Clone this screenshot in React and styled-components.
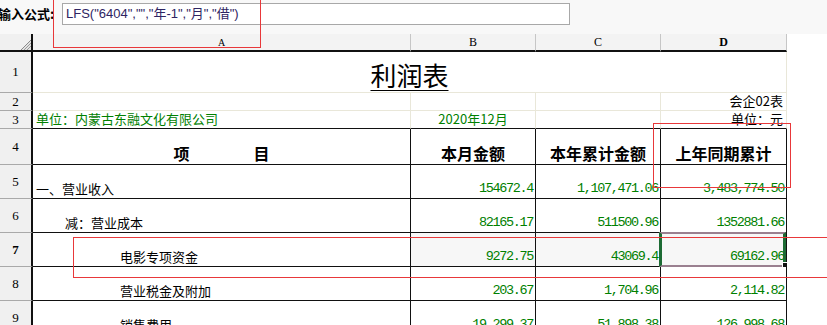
import React from "react";
import styled, { createGlobalStyle } from "styled-components";

// 列宽: 行号 | A | B | C | D | 空白
const COLS = "33px 378px 125px 125px 126px 1fr";
const LIGHT = "#e9e7d9";
const DARK = "#111";
const GREEN = "#008000";

const GlobalStyle = createGlobalStyle`
  html, body {
    margin: 0;
    padding: 0;
    overflow: hidden;
    background: #fff;
  }
  body {
    font-family: "Noto Sans CJK SC", "Liberation Sans", sans-serif;
    color: #000;
  }
`;

const Page = styled.div`
  position: relative;
  width: 827px;
  height: 325px;
  overflow: hidden;
`;

// 公式栏
const FormulaBar = styled.div`
  display: flex;
  align-items: flex-start;
  height: 34px;
  padding-top: 3px;
  box-sizing: border-box;
  background: #f8f8f8;
`;

const FormulaLabel = styled.div`
  width: 64px;
  margin-left: -2px;
  height: 22px;
  line-height: 22px;
  font-size: 13px;
  font-weight: 700;
  white-space: nowrap;
`;

const FormulaBox = styled.div`
  width: 508px;
  height: 22px;
  box-sizing: border-box;
  border: 1px solid #a8a8a8;
  background: #fff;
  padding-left: 3px;
  line-height: 20px;
  font-size: 13px;
  font-family: "Liberation Sans", "Noto Sans CJK SC", sans-serif;
  color: #2e2462;
  white-space: nowrap;
`;

// 列标题
const HeaderRow = styled.div`
  display: grid;
  grid-template-columns: ${COLS};
  height: 18px;
`;

const Corner = styled.div`
  position: relative;
  background: #f0f0f0;
  border-right: 2px solid ${DARK};
  border-bottom: 2px solid ${DARK};
  svg {
    position: absolute;
    right: 0;
    bottom: 0;
  }
`;

const ColHead = styled.div`
  display: flex;
  align-items: center;
  justify-content: center;
  background: #f3f3f3;
  border-right: 1px solid #c6c6c6;
  border-bottom: 2px solid ${DARK};
  font-family: "Liberation Serif", serif;
  font-size: ${(p) => (p.$small ? "10px" : "12px")};
  font-weight: ${(p) => (p.$active ? 700 : 400)};
`;

const Blank = styled.div`
  background: #fff;
`;

// 表格行
const Row = styled.div`
  display: grid;
  grid-template-columns: ${COLS};
  height: ${(p) => p.$h}px;
`;

const RowHead = styled.div`
  display: flex;
  align-items: center;
  justify-content: center;
  background: #f0f0f0;
  border-right: 2px solid ${DARK};
  border-bottom: 1px solid #a9a9a9;
  font-family: "Liberation Serif", serif;
  font-size: 13px;
  font-weight: ${(p) => (p.$active ? 700 : 400)};
`;

const Cell = styled.div`
  position: relative;
  display: flex;
  align-items: flex-end;
  justify-content: ${(p) => p.$align || "flex-start"};
  box-sizing: border-box;
  padding: 0 3px 1px ${(p) => (p.$indent != null ? p.$indent : 3)}px;
  border-right: 1px solid ${(p) => (p.$dark ? DARK : LIGHT)};
  border-bottom: 1px solid ${(p) => (p.$darkBottom || p.$dark ? DARK : LIGHT)};
  background: ${(p) => (p.$shade ? "#f7f7f7" : "#fff")};
  color: ${(p) => (p.$green ? GREEN : "#000")};
  font-size: 13px;
  line-height: 16px;
  white-space: nowrap;
`;

const TitleCell = styled(Cell)`
  grid-column: span 4;
  justify-content: center;
  padding-bottom: 2px;
`;

const Title = styled.span`
  font-size: 26px;
  line-height: 30px;
  text-decoration: underline;
  text-decoration-thickness: 1px;
  text-underline-offset: 4px;
`;

const HeadText = styled.span`
  font-size: 16px;
  font-weight: 700;
  line-height: 19px;
`;

const Num = styled.span`
  font-family: "Liberation Mono", monospace;
  font-size: 13.5px;
  letter-spacing: -1.35px;
  margin-right: -1px;
  color: ${GREEN};
`;

const Selection = styled.div`
  position: absolute;
  left: -2px;
  top: -1px;
  right: 0;
  bottom: -1px;
  border-left: 3px solid #1d6b34;
  border-right: 3px solid #1d6b34;
  border-top: 2px solid #9a8090;
  border-bottom: 2px solid #9a8090;
  pointer-events: none;
  &::after {
    content: "";
    position: absolute;
    right: -5px;
    bottom: -3px;
    width: 4px;
    height: 4px;
    background: #111;
    border: 1px solid #fff;
  }
`;

// 标注框
const Mark = styled.div`
  position: absolute;
  left: ${(p) => p.$x}px;
  top: ${(p) => p.$y}px;
  width: ${(p) => p.$w}px;
  height: ${(p) => p.$h}px;
  box-sizing: border-box;
  border: 1px solid #e8383a;
  pointer-events: none;
`;

const Hatch = () => (
  <svg width="10" height="10" viewBox="0 0 10 10">
    <polygon points="10,0 10,10 0,10" fill="#e2e2e2" />
    <line x1="0" y1="10" x2="10" y2="0" stroke="#8a8a8a" strokeWidth="1" />
    <line x1="3" y1="10" x2="10" y2="3" stroke="#9a9a9a" strokeWidth="1" />
    <line x1="6" y1="10" x2="10" y2="6" stroke="#9a9a9a" strokeWidth="1" />
  </svg>
);

const rows = [
  { n: 5, label: "一、营业收入", indent: 3, b: "154672.4", c: "1,107,471.06", d: "3,483,774.50" },
  { n: 6, label: "减：营业成本", indent: 32, b: "82165.17", c: "511500.96", d: "1352881.66" },
  { n: 7, label: "电影专项资金", indent: 87, b: "9272.75", c: "43069.4", d: "69162.96", active: true },
  { n: 8, label: "营业税金及附加", indent: 87, b: "203.67", c: "1,704.96", d: "2,114.82" },
  { n: 9, label: "销售费用", indent: 87, b: "19,299.37", c: "51,898.38", d: "126,998.68" },
];

export default function App() {
  return (
    <Page>
      <GlobalStyle />
      <FormulaBar>
        <FormulaLabel>输入公式:</FormulaLabel>
        <FormulaBox>LFS("6404","","年-1","月","借")</FormulaBox>
      </FormulaBar>

      <HeaderRow>
        <Corner>
          <Hatch />
        </Corner>
        <ColHead $small>A</ColHead>
        <ColHead>B</ColHead>
        <ColHead>C</ColHead>
        <ColHead $active>D</ColHead>
        <Blank />
      </HeaderRow>

      <Row $h={41}>
        <RowHead>1</RowHead>
        <TitleCell>
          <Title>利润表</Title>
        </TitleCell>
        <Blank />
      </Row>

      <Row $h={18}>
        <RowHead>2</RowHead>
        <Cell />
        <Cell />
        <Cell />
        <Cell $align="flex-end">会企02表</Cell>
        <Blank />
      </Row>

      <Row $h={18}>
        <RowHead>3</RowHead>
        <Cell $darkBottom $green>单位：内蒙古东融文化有限公司</Cell>
        <Cell $darkBottom $green $align="center">2020年12月</Cell>
        <Cell $darkBottom />
        <Cell $darkBottom $align="flex-end">单位：元</Cell>
        <Blank />
      </Row>

      <Row $h={36}>
        <RowHead>4</RowHead>
        <Cell $dark $align="center">
          <HeadText>项　　　　目</HeadText>
        </Cell>
        <Cell $dark $align="center">
          <HeadText>本月金额</HeadText>
        </Cell>
        <Cell $dark $align="center">
          <HeadText>本年累计金额</HeadText>
        </Cell>
        <Cell $dark $align="center">
          <HeadText>上年同期累计</HeadText>
        </Cell>
        <Blank />
      </Row>

      {rows.map((r) => (
        <Row $h={34} key={r.n}>
          <RowHead $active={r.active}>{r.n}</RowHead>
          <Cell $dark $indent={r.indent}>
            {r.label}
          </Cell>
          <Cell $dark $shade={r.active} $align="flex-end">
            <Num>{r.b}</Num>
          </Cell>
          <Cell $dark $shade={r.active} $align="flex-end">
            <Num>{r.c}</Num>
          </Cell>
          <Cell $dark $shade={r.active} $align="flex-end">
            <Num>{r.d}</Num>
            {r.active && <Selection />}
          </Cell>
          <Blank />
        </Row>
      ))}

      <Mark $x={53} $y={-2} $w={208} $h={50} />
      <Mark $x={653} $y={123} $w={138} $h={65} />
      <Mark $x={73} $y={237} $w={800} $h={41} />
    </Page>
  );
}
